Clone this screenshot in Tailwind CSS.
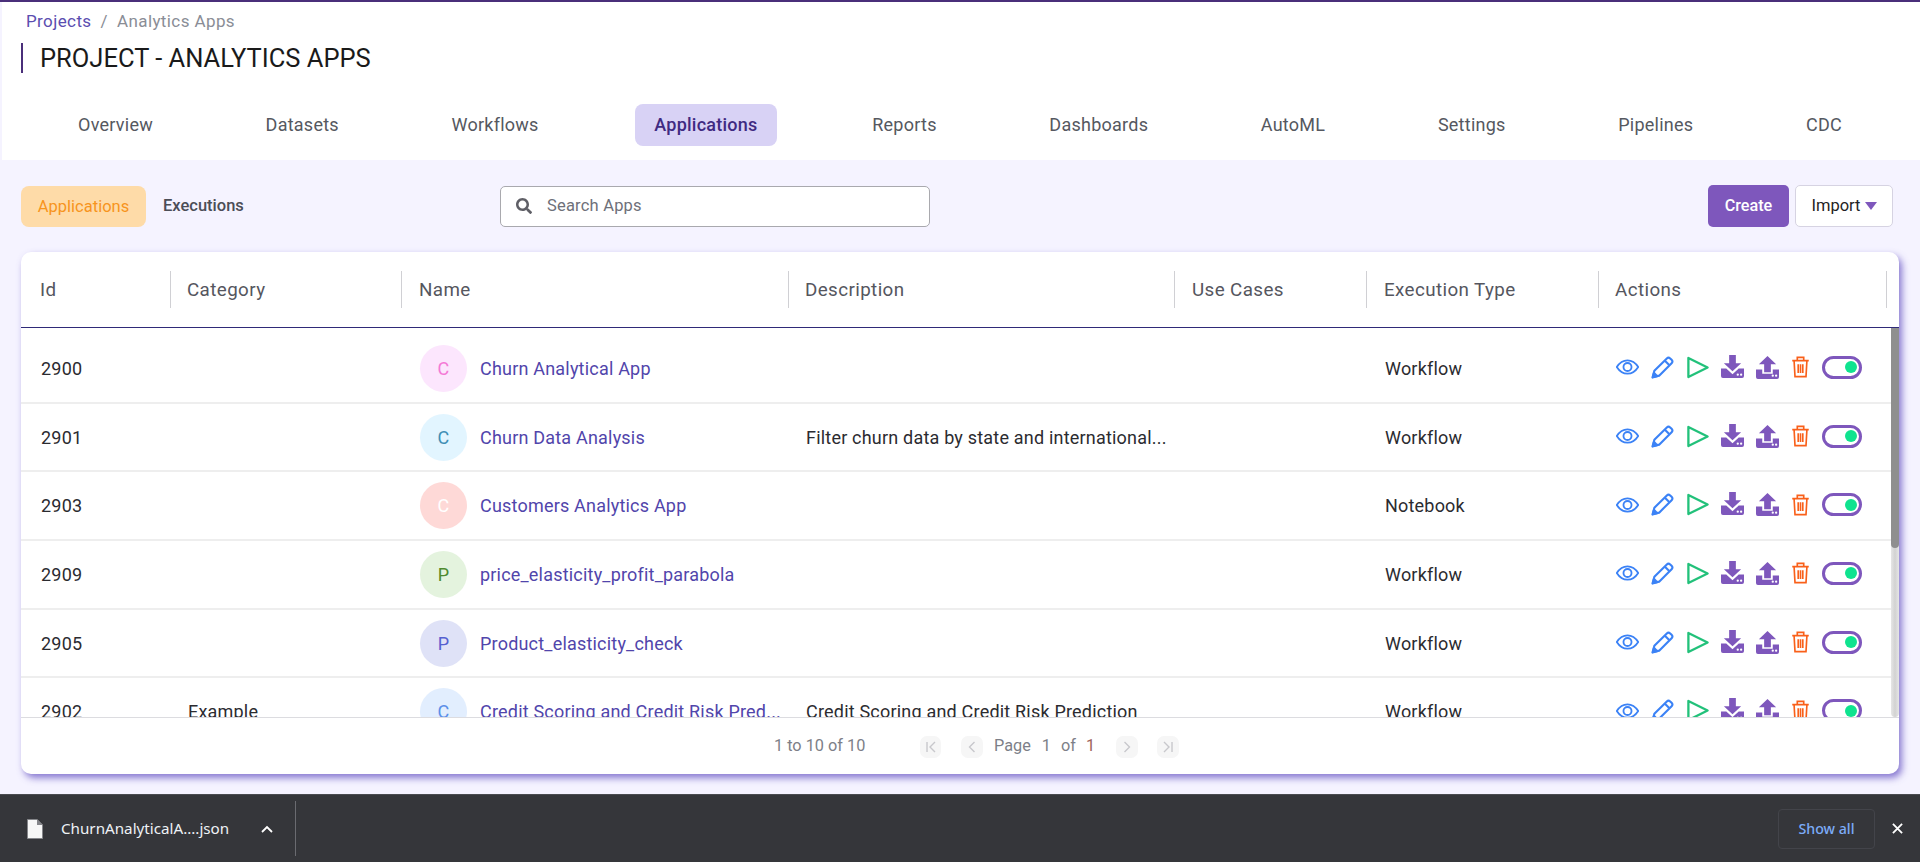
<!DOCTYPE html>
<html lang="en">

<head>
    <meta charset="UTF-8">
    <title>Analytics Apps</title>
    <script src="https://cdn.jsdelivr.net/npm/@tailwindcss/browser@4"></script>
</head>

<body class="h-[862px] overflow-hidden flex flex-col bg-[#f5f3ff] font-['Roboto',sans-serif]">
    <!-- Page -->
    <div class="h-[794px] flex flex-col border-t-2 border-[#4a2f7a]">
        <header class="h-[158px] shrink-0 ml-[2px] bg-white">
            <nav class="pl-[24px] pt-[9px] h-[27px] text-[17px] leading-[20px] tracking-[0.4px] text-[#8a8d96]">
                <span class="text-[#5b4db0]">Projects</span><span class="mx-[9px]">/</span><span>Analytics Apps</span>
            </nav>
            <div class="ml-[19px] mt-[14px] h-[30px] border-l-2 border-[#4a2f7a] pl-[17px] text-[25.5px] leading-[30px] text-[#1a1a1a]">PROJECT - ANALYTICS APPS</div>
            <div class="mt-[31px] pl-[57px] pr-[59px] flex justify-between items-center text-[18px] text-[#555860] tracking-[0.25px]">
                <span class="px-[19px] h-[42px] leading-[42px]">Overview</span>
                <span class="px-[19px] h-[42px] leading-[42px]">Datasets</span>
                <span class="px-[19px] h-[42px] leading-[42px]">Workflows</span>
                <span class="ml-[3px] px-[19px] h-[42px] leading-[42px] rounded-[8px] bg-[#d8d2f5] text-[#3f2a82] font-medium">Applications</span>
                <span class="ml-[2px] px-[19px] h-[42px] leading-[42px]">Reports</span>
                <span class="px-[19px] h-[42px] leading-[42px]">Dashboards</span>
                <span class="px-[19px] h-[42px] leading-[42px]">AutoML</span>
                <span class="px-[19px] h-[42px] leading-[42px]">Settings</span>
                <span class="px-[19px] h-[42px] leading-[42px]">Pipelines</span>
                <span class="px-[19px] h-[42px] leading-[42px]">CDC</span>
            </div>
        </header>

        <!-- Toolbar -->
        <div class="h-[92px] shrink-0 pl-[21px] pr-[27px] flex items-center relative">
            <span class="w-[125px] h-[41px] leading-[41px] text-center rounded-[8px] bg-[#fedba8] text-[#f7941d] text-[16.5px]">Applications</span>
            <span class="ml-[17px] w-[337px] text-[16.5px] font-medium text-[#4b4d57]">Executions</span>
            <div class="w-[430px] h-[41px] rounded-[5px] border border-[#a9a9ae] bg-white flex items-center pl-[15px] text-[16.5px] tracking-[0.2px] text-[#6e7079]">
                <svg class="w-[16px] h-[16px] mr-[15px]" viewBox="0 0 512 512" fill="#5f5f66"><path d="M505 442.700 405.300 343c-4.500-4.500-10.600-7-17-7H372c27.600-35.300 44-79.700 44-128C416 93.100 322.900 0 208 0S0 93.100 0 208s93.100 208 208 208c48.300 0 92.700-16.400 128-44v16.300c0 6.400 2.500 12.500 7 17l99.700 99.700c9.400 9.400 24.600 9.400 33.900 0l28.300-28.300c9.400-9.400 9.400-24.600.100-34zM208 336c-70.700 0-128-57.200-128-128 0-70.700 57.200-128 128-128 70.700 0 128 57.200 128 128 0 70.700-57.200 128-128 128z"/></svg>
                Search Apps
            </div>
            <div class="ml-auto flex items-center gap-[6px]">
                <span class="w-[81px] h-[42px] leading-[42px] text-center rounded-[5px] bg-[#7e57bc] text-white text-[16.2px] font-medium">Create</span>
                <span class="w-[98px] h-[42px] rounded-[5px] border border-[#d6d3e2] bg-white text-[16.5px] text-[#1f1f24] flex items-center justify-center gap-[4px]">Import
                    <svg class="w-[12px] h-[8px]" viewBox="0 0 12 8" fill="#7e57bc"><path d="M0 0h12L6 8z"/></svg>
                </span>
            </div>
        </div>

        <!-- Grid -->
        <section class="ml-[21px] w-[1878px] h-[522px] shrink-0 rounded-[10px] bg-white shadow-[3px_4px_7px_rgba(90,70,190,0.7)] flex flex-col overflow-hidden">
            <div class="h-[76px] shrink-0 flex items-center border-b border-[#2f2a78] text-[18.8px] text-[#55565e] tracking-[0.4px]">
                <div class="w-[149px] pl-[19px] h-[37px] leading-[39px]">Id</div>
                <div class="w-[231px] pl-[16px] h-[37px] leading-[39px] border-l border-[#d0d0d4]">Category</div>
                <div class="w-[387px] pl-[17px] h-[37px] leading-[39px] border-l border-[#d0d0d4]">Name</div>
                <div class="w-[386px] pl-[16px] h-[37px] leading-[39px] border-l border-[#d0d0d4]">Description</div>
                <div class="w-[192px] pl-[17px] h-[37px] leading-[39px] border-l border-[#d0d0d4]">Use Cases</div>
                <div class="w-[232px] pl-[17px] h-[37px] leading-[39px] border-l border-[#d0d0d4]">Execution Type</div>
                <div class="w-[289px] pl-[16px] h-[37px] leading-[39px] border-l border-r border-[#d0d0d4]">Actions</div>
            </div>
            <div id="rows" class="relative h-[390px] shrink-0 overflow-hidden pt-[7px] border-b border-[#dcdce0] text-[18px] text-[#2b2b30] tracking-[0.2px]">
                <!-- scrollbar -->
                <div class="absolute right-0 top-0 bottom-0 w-[8px] bg-linear-to-r from-[#e6e6e6] via-[#d2d2d2] to-[#e6e6e6] rounded-b-[4px]">
                    <div class="h-[220px] bg-[#8f8f8f] rounded-b-[4px]"></div>
                </div>
            </div>
            <div class="flex-1 flex items-center pt-[1px] text-[16.3px] text-[#7d7f88]">
                <span class="ml-[753px] w-[146px]">1 to 10 of 10</span>
                <span class="w-[21px] h-[22px] rounded-[7px] bg-[#f6f6f6] flex items-center justify-center">
                    <svg class="w-[14px] h-[14px]" viewBox="0 0 14 14" fill="none" stroke="#c8c8cc" stroke-width="1.400"><path d="M3 2v10M11 2 6 7l5 5"/></svg>
                </span>
                <span class="ml-[20px] w-[22px] h-[22px] rounded-[7px] bg-[#f6f6f6] flex items-center justify-center">
                    <svg class="w-[14px] h-[14px]" viewBox="0 0 14 14" fill="none" stroke="#c8c8cc" stroke-width="1.400"><path d="M9.500 2 4.500 7l5 5"/></svg>
                </span>
                <span class="ml-[11px]">Page</span><span class="ml-[11px]">1</span><span class="ml-[10px]">of</span><span class="ml-[10px] text-[#a0625c]">1</span>
                <span class="ml-[21px] w-[22px] h-[22px] rounded-[7px] bg-[#f6f6f6] flex items-center justify-center">
                    <svg class="w-[14px] h-[14px]" viewBox="0 0 14 14" fill="none" stroke="#c8c8cc" stroke-width="1.400"><path d="M4.500 2l5 5-5 5"/></svg>
                </span>
                <span class="ml-[19px] w-[22px] h-[22px] rounded-[7px] bg-[#f6f6f6] flex items-center justify-center">
                    <svg class="w-[14px] h-[14px]" viewBox="0 0 14 14" fill="none" stroke="#c8c8cc" stroke-width="1.400"><path d="M11 2v10M3 2l5 5-5 5"/></svg>
                </span>
            </div>
        </section>
    </div>

    <!-- Download bar -->
    <footer class="h-[68px] shrink-0 bg-[#35363a] border-t border-[#4a4b50] flex items-center text-white relative">
        <svg class="ml-[27px] w-[16px] h-[20px]" viewBox="0 0 16 20"><path d="M.5.5h9.500l5.500 5.500v13.500H.5z" fill="#f7f7f7" stroke="#85868a"/><path d="M10 0l6 6h-6z" fill="#85868a"/></svg>
        <span class="ml-[18px] w-[200px] text-[15.2px] font-['Noto_Sans',sans-serif] text-[#eef2f6]">ChurnAnalyticalA....json</span>
        <svg class="w-[12px] h-[8px]" viewBox="0 0 12 8" fill="none" stroke="#fff" stroke-width="1.800"><path d="M1 7l5-5 5 5"/></svg>
        <div class="ml-[22px] w-px h-[55px] bg-[#6a6b70]"></div>
        <span class="ml-auto w-[97px] h-[40px] leading-[38px] text-center rounded-[4px] border border-[#43444a] text-[14.200px] font-medium font-['Noto_Sans',sans-serif] text-[#7cacf8]">Show all</span>
        <svg class="ml-[17px] mr-[17px] w-[11px] h-[11px]" viewBox="0 0 12 12" fill="none" stroke="#fff" stroke-width="2"><path d="M1 1l10 10M11 1 1 11"/></svg>
    </footer>

    <script>
        // table rows are built from this list
        const apps = [
            { id: 2900, cat: '', name: 'Churn Analytical App', desc: '', type: 'Workflow', bg: '#fce6fd', fg: '#f47ad6' },
            { id: 2901, cat: '', name: 'Churn Data Analysis', desc: 'Filter churn data by state and international...', type: 'Workflow', bg: '#e2f5ff', fg: '#3f8fb5' },
            { id: 2903, cat: '', name: 'Customers Analytics App', desc: '', type: 'Notebook', bg: '#fed9d7', fg: '#ffffff' },
            { id: 2909, cat: '', name: 'price_elasticity_profit_parabola', desc: '', type: 'Workflow', bg: '#e4f3de', fg: '#4f8a2f' },
            { id: 2905, cat: '', name: 'Product_elasticity_check', desc: '', type: 'Workflow', bg: '#dfe2f7', fg: '#5560d0' },
            { id: 2902, cat: 'Example', name: 'Credit Scoring and Credit Risk Pred...', desc: 'Credit Scoring and Credit Risk Prediction', type: 'Workflow', bg: '#e2eefe', fg: '#5b8fe8' },
        ];

        const actions = `
            <svg class="w-[23px] h-[16px]" viewBox="0 0 24 16" fill="none" stroke="#3b82f6" stroke-width="1.900"><path d="M.8 8C4 3 7.600 1 12 1S20 3 23.200 8C20 13 16.400 15 12 15S4 13 .8 8z"/><circle cx="12" cy="8" r="4.200"/></svg>
            <svg class="ml-[12px] w-[23px] h-[23px]" viewBox="0 0 24 24" fill="none" stroke="#3b82f6" stroke-width="2.200" stroke-linejoin="round"><path d="M2 22l1.500-6.500L16.500 2.500a2.500 2.500 0 0 1 3.500 0l1.500 1.500a2.500 2.500 0 0 1 0 3.500L8.500 20.500z"/><path d="M14.500 5l4.500 4.500"/><path d="M1.500 22.500l1.500-5 3.500 3.500z" fill="#3b82f6"/></svg>
            <svg class="ml-[12px] w-[23px] h-[23px]" viewBox="0 0 24 24" fill="none" stroke="#22c17a" stroke-width="2.400" stroke-linejoin="round"><path d="M2.500 2 22.500 12 2.500 22z"/></svg>
            <svg class="ml-[12px] w-[23px] h-[23px] -translate-y-[1px]" viewBox="0 0 24 24" fill="#7e57bc"><path d="M8.500 0h7v8.500H21L12 17 3 8.500h5.500z"/><path d="M0 14h5.500l6.500 6 6.500-6H24v8a2 2 0 0 1-2 2H2a2 2 0 0 1-2-2z"/><circle cx="17.500" cy="20.500" r="1.200" fill="#fff"/><circle cx="21" cy="20.500" r="1.200" fill="#fff"/></svg>
            <svg class="ml-[12px] w-[23px] h-[23px]" viewBox="0 0 24 24" fill="#7e57bc"><path d="M12 0l9 8.500h-5.500V17h-7V8.500H3z"/><path d="M0 14h6.500v4.500h11V14H24v8a2 2 0 0 1-2 2H2a2 2 0 0 1-2-2z"/><circle cx="17.500" cy="20.500" r="1.200" fill="#fff"/><circle cx="21" cy="20.500" r="1.200" fill="#fff"/></svg>
            <svg class="ml-[12px] w-[19px] h-[22px]" viewBox="0 0 20 24" fill="none" stroke="#f9601a" stroke-width="1.800"><path d="M1 5h18M6.500 5V1.500h7V5M3 5l1 17.500h12L17 5M7.500 9v9.500M10 9v9.500M12.500 9v9.500"/></svg>
            <span class="ml-[12px] w-[40px] h-[23px] rounded-full border-[3px] border-[#7e57bc] flex items-center justify-end pr-[2px]"><span class="w-[12px] h-[12px] rounded-full bg-[#0fe38f]"></span></span>`;

        const rows = document.getElementById('rows');
        apps.forEach((a, i) => {
            rows.insertAdjacentHTML('beforeend', `
                <div class="flex items-center h-[68.7px] border-b-2 border-[#eeeeee]">
                    <div class="w-[149px] pl-[20px]">${a.id}</div>
                    <div class="w-[231px] pl-[18px]">${a.cat}</div>
                    <div class="w-[387px] pl-[19px] flex items-center">
                        <span class="w-[47px] h-[47px] rounded-full flex items-center justify-center shrink-0" style="background:${a.bg};color:${a.fg}">${a.name[0].toUpperCase()}</span>
                        <span class="ml-[13px] text-[#5145ab]">${a.name}</span>
                    </div>
                    <div class="w-[386px] pl-[18px]">${a.desc}</div>
                    <div class="w-[192px]"></div>
                    <div class="w-[233px] pl-[19px]">${a.type}</div>
                    <div class="pl-[17px] flex items-center -translate-y-[1px]">${actions}</div>
                </div>`);
        });
    </script>
</body>

</html>
